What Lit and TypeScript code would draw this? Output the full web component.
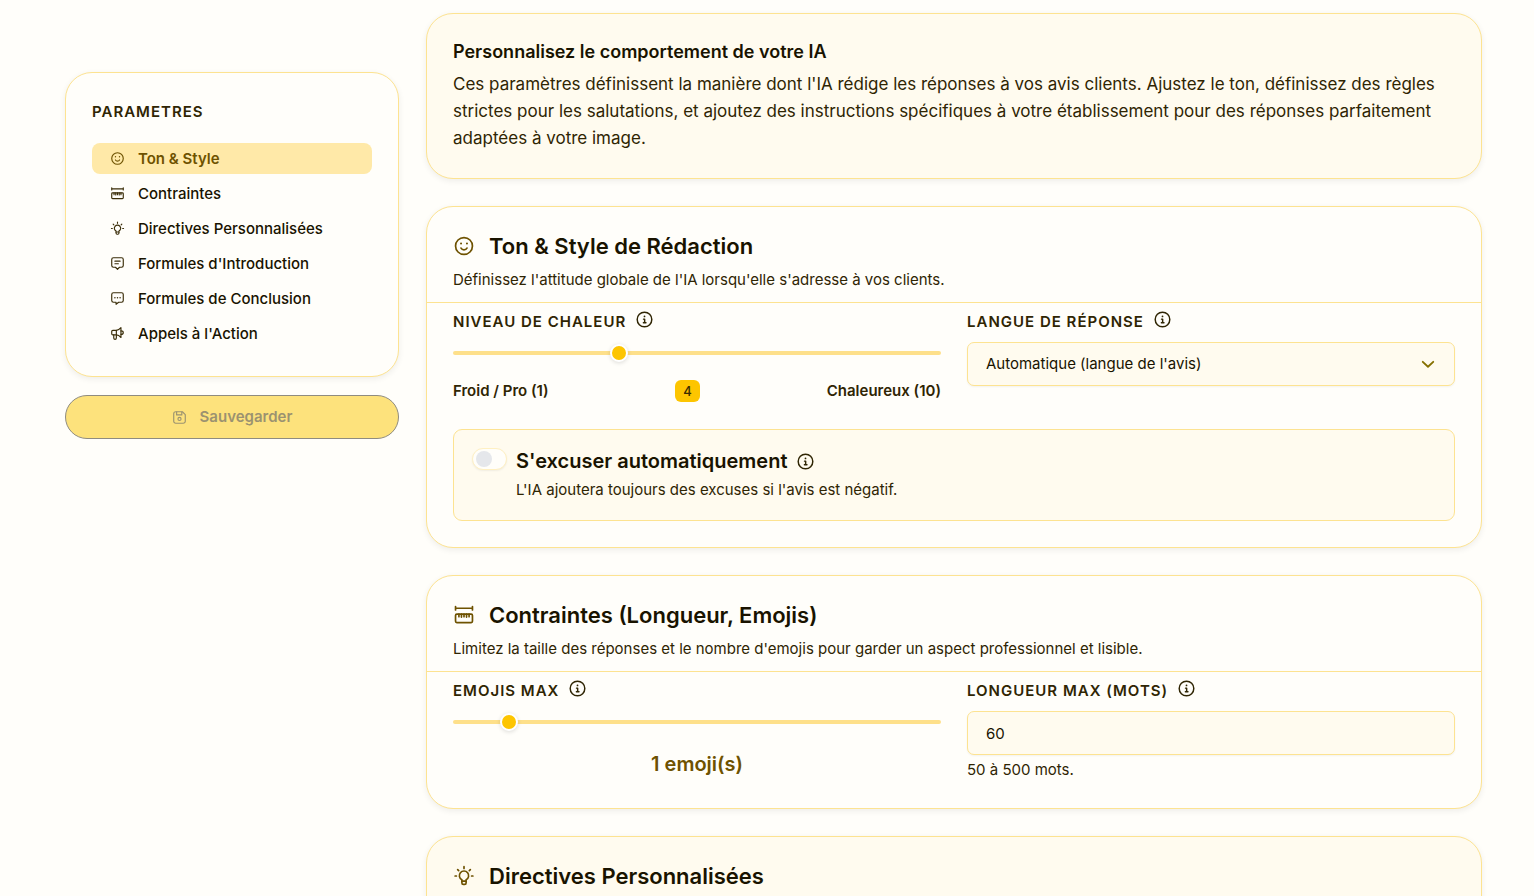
import { LitElement, html, css, svg } from "lit";
import { customElement, property, state } from "lit/decorators.js";

const ICONS: Record<string, unknown> = {
  smile: svg`<circle cx="12" cy="12" r="10"/><path d="M8.500 14.500c.7 1.300 2 2 3.500 2s2.800-.7 3.500-2"/><path d="M8.500 9h.01M15.500 9h.01" stroke-width="2.400"/>`,
  ruler: svg`<path d="M2 2v4M22 2v4M2 4h20"/><rect x="2" y="11" width="20" height="10" rx="1.500"/><path d="M6 11v3M9 11v3.500M12 11v3M15 11v3.500M18 11v3"/>`,
  bulb: svg`<path d="M9.500 16.500a5.500 5.500 0 1 1 5 0v3.500c0 1-.8 2-1.800 2h-1.400c-1 0-1.800-1-1.800-2z"/><path d="M9.500 18h5M12 1v2M1.500 12h1.500M21 12h1.500M4.500 4.500l1.200 1.200M19.500 4.500l-1.200 1.200"/>`,
  intro: svg`<path d="M5 2h14a3 3 0 0 1 3 3v10.500a3 3 0 0 1-3 3h-3.500L12 22l-3.500-3.500H5a3 3 0 0 1-3-3V5a3 3 0 0 1 3-3z"/><path d="M7.500 8h9M7.500 12.500h6"/>`,
  outro: svg`<path d="M5 2h14a3 3 0 0 1 3 3v10.500a3 3 0 0 1-3 3h-5L9.500 22v-3.500H5a3 3 0 0 1-3-3V5a3 3 0 0 1 3-3z"/><path d="M7.500 10.500h.01M12 10.500h.01M16.500 10.500h.01" stroke-width="2.600"/>`,
  megaphone: svg`<path d="M2 8.500a2 2 0 0 1 2-2h6c3 0 5.500-1.500 8-4.500v17c-2.500-3-5-4.500-8-4.500H4a2 2 0 0 1-2-2z"/><path d="M10 6.500v8M18 7.500c2.300 0 4 1 4 3s-1.700 3-4 3M5.500 14.500v5.500a2 2 0 0 0 4.500 0v-5.500"/>`,
  save: svg`<path d="M2 5.500A3.500 3.500 0 0 1 5.500 2H17l5 5v11.500a3.500 3.500 0 0 1-3.500 3.500h-13A3.500 3.500 0 0 1 2 18.500z"/><path d="M7 2.500v5h9v-5"/><circle cx="12" cy="14.500" r="2.700"/>`,
  info: svg`<circle cx="12" cy="12" r="10"/><path d="M10.700 11.500h1.500v5M10.500 16.500h3.500"/><path d="M12 7.800h.01" stroke-width="2.400"/>`,
  chevron: svg`<path d="M3.500 8.500l8.500 8 8.500-8" stroke-width="3"/>`,
};

@customElement("ui-icon")
class UiIcon extends LitElement {
  @property() name = "info";
  static styles = css`
    :host { display: inline-flex; flex: none; width: 19px; height: 19px; }
    .glyph { width: 100%; height: 100%; fill: none; stroke: currentColor; stroke-width: 2; stroke-linecap: round; stroke-linejoin: round; }
  `;
  render() {
    return html`<svg class="glyph" viewBox="-1 -1 26 26" aria-hidden="true">${ICONS[this.name]}</svg>`;
  }
}

@customElement("app-root")
class AppRoot extends LitElement {
  @state() private warmth = 4;
  @state() private emojis = 1;
  @state() private section = 0;

  private nav = [
    ["smile", "Ton & Style"],
    ["ruler", "Contraintes"],
    ["bulb", "Directives Personnalisées"],
    ["intro", "Formules d'Introduction"],
    ["outro", "Formules de Conclusion"],
    ["megaphone", "Appels à l'Action"],
  ];

  static styles = css`
    :host {
      display: block;
      height: 100vh;
      overflow: hidden;
      background: #fffefa;
      color: #191300;
      font-family: Inter, "Liberation Sans", sans-serif;
      font-size: 15px;
      line-height: 24px;
    }
    *, *::before, *::after { box-sizing: border-box; }
    h1, h2, h3, p { margin: 0; }
    .page {
      display: grid;
      grid-template-columns: 334px minmax(0, 1fr);
      gap: 27px;
      padding: 13px 52px 0 65px;
      align-items: start;
    }
    .side { display: flex; flex-direction: column; gap: 18px; padding-top: 59px; }
    .main { display: flex; flex-direction: column; gap: 27px; }
    .card {
      border: 1px solid #fde391;
      border-radius: 27px;
      background: #fffefa;
      box-shadow: 0 2px 6px rgba(0, 0, 0, 0.07);
    }
    .tinted { background: #fffbef; }
    .padded { padding: 26px; }
    .menu { padding: 27px 26px; }
    .caps {
      font-size: 15px;
      font-weight: 600;
      letter-spacing: 1px;
      text-transform: uppercase;
      color: #2f2503;
    }
    .nav { display: flex; flex-direction: column; gap: 4px; padding-top: 19px; }
    .item {
      display: flex;
      align-items: center;
      gap: 13px;
      height: 31px;
      padding: 0 18px;
      border-radius: 8px;
      color: #191300;
      font-weight: 500;
      text-decoration: none;
    }
    .item ui-icon { width: 15px; height: 15px; color: #3a2d08; }
    .item.active { background: #ffe9a8; color: #6e5200; font-weight: 600; }
    .item.active ui-icon { color: #6e5200; }
    .save {
      display: flex;
      align-items: center;
      justify-content: center;
      gap: 13px;
      height: 44px;
      border: 1px solid #8f8c80;
      border-radius: 22px;
      background: #fde27c;
      color: #9b9270;
      font: 600 15px/24px Inter, sans-serif;
    }
    .save ui-icon { width: 15px; height: 15px; }
    .lead { font-size: 18px; font-weight: 600; line-height: 24px; }
    .intro { padding-top: 7px; font-size: 17px; line-height: 27px; color: #2f2503; }
    .head { padding: 25px 26px 10px; border-bottom: 1px solid #fde391; }
    .head-row { display: flex; align-items: center; gap: 14px; }
    .head-row ui-icon { width: 22px; height: 22px; color: #6e5200; }
    .title { font-size: 22px; font-weight: 600; line-height: 28px; }
    .sub { padding-top: 8px; color: #2f2503; }
    .body { padding: 7px 26px 26px; }
    .cols { display: grid; grid-template-columns: repeat(2, minmax(0, 1fr)); gap: 26px; }
    .label-row { display: flex; align-items: flex-start; gap: 9px; color: #2f2503; }
    .option .label-row { align-items: center; }
    .range {
      display: block;
      appearance: none;
      width: 100%;
      height: 18px;
      margin: 10px 0 0;
      background: transparent;
    }
    .range::-webkit-slider-runnable-track { height: 4px; border-radius: 2px; background: #fee08a; }
    .range::-webkit-slider-thumb {
      appearance: none;
      width: 18px;
      height: 18px;
      margin-top: -7px;
      border: 2px solid #fff;
      border-radius: 50%;
      background: #fdc500;
      box-shadow: 0 1px 4px rgba(0, 0, 0, 0.14);
    }
    .scale { display: flex; justify-content: space-between; align-items: center; padding-top: 17px; font-weight: 600; color: #2f2503; }
    .badge { padding: 0 8px; border-radius: 6px; background: #fdc500; color: #3a2d00; font-size: 13px; font-weight: 500; line-height: 22px; }
    .count { display: block; padding-top: 20px; text-align: center; font-size: 20px; font-weight: 600; line-height: 27px; color: #6e5200; }
    .field {
      display: block;
      appearance: none;
      width: 100%;
      height: 44px;
      padding: 0 18px;
      border: 1px solid #fde391;
      border-radius: 7px;
      background: #fffbef;
      color: #191300;
      font: 400 15px/24px Inter, sans-serif;
      box-shadow: 0 1px 2px rgba(0, 0, 0, 0.05);
    }
    .control { position: relative; margin-top: 8px; }
    .control ui-icon { position: absolute; right: 19px; top: 14px; width: 16px; height: 16px; color: #857000; pointer-events: none; }
    .hint { padding-top: 3px; color: #2f2503; }
    .option {
      display: flex;
      align-items: flex-start;
      gap: 9px;
      margin-top: 26px;
      padding: 18px;
      border: 1px solid #fde391;
      border-radius: 9px;
      background: #fffbef;
    }
    .switch {
      display: flex;
      align-items: center;
      flex: none;
      appearance: none;
      width: 35px;
      height: 22px;
      margin: 0;
      padding: 2px 3px;
      border: 1px solid #fff0c2;
      border-radius: 11px;
      background: #fffefa;
      box-shadow: 0 1px 2px rgba(0, 0, 0, 0.06);
    }
    .switch::before { content: ""; width: 16px; height: 16px; border-radius: 50%; background: #e5e7eb; }
    .switch:checked { justify-content: flex-end; background: #fdc500; }
    .option-title { font-size: 20px; font-weight: 600; line-height: 27px; color: #191300; }
    .option-text { padding-top: 3px; color: #2f2503; }
  `;

  private header(icon: string, title: string, sub?: string) {
    return html`<header class="head">
      <div class="head-row"><ui-icon name=${icon}></ui-icon><h2 class="title">${title}</h2></div>
      ${sub ? html`<p class="sub">${sub}</p>` : ""}
    </header>`;
  }

  private label(id: string, text: string) {
    return html`<div class="label-row"><label class="caps" for=${id}>${text}</label><ui-icon name="info"></ui-icon></div>`;
  }

  render() {
    return html`<div class="page">
      <aside class="side">
        <div class="card menu">
          <h3 class="caps">Parametres</h3>
          <nav class="nav">
            ${this.nav.map(
              ([icon, text], i) => html`<a class="item ${i === this.section ? "active" : ""}" href="#section-${i}" @click=${() => (this.section = i)}>
                <ui-icon name=${icon}></ui-icon><span>${text}</span>
              </a>`
            )}
          </nav>
        </div>
        <button class="save" type="button" disabled><ui-icon name="save"></ui-icon>Sauvegarder</button>
      </aside>
      <main class="main">
        <section class="card tinted padded">
          <h1 class="lead">Personnalisez le comportement de votre IA</h1>
          <p class="intro">Ces paramètres définissent la manière dont l'IA rédige les réponses à vos avis clients. Ajustez le ton, définissez des règles strictes pour les salutations, et ajoutez des instructions spécifiques à votre établissement pour des réponses parfaitement adaptées à votre image.</p>
        </section>
        <section class="card" id="section-0">
          ${this.header("smile", "Ton & Style de Rédaction", "Définissez l'attitude globale de l'IA lorsqu'elle s'adresse à vos clients.")}
          <div class="body">
            <div class="cols">
              <div>
                ${this.label("warmth", "Niveau de chaleur")}
                <input class="range" id="warmth" type="range" min="1" max="10" .value=${String(this.warmth)} @input=${(e: Event) => (this.warmth = +(e.target as HTMLInputElement).value)} />
                <div class="scale"><span>Froid / Pro (1)</span><output class="badge" for="warmth">${this.warmth}</output><span>Chaleureux (10)</span></div>
              </div>
              <div>
                ${this.label("language", "Langue de réponse")}
                <div class="control">
                  <select class="field" id="language"><option>Automatique (langue de l'avis)</option></select>
                  <ui-icon name="chevron"></ui-icon>
                </div>
              </div>
            </div>
            <div class="option">
              <input class="switch" id="apologise" type="checkbox" />
              <div>
                <div class="label-row"><label class="option-title" for="apologise">S'excuser automatiquement</label><ui-icon name="info"></ui-icon></div>
                <p class="option-text">L'IA ajoutera toujours des excuses si l'avis est négatif.</p>
              </div>
            </div>
          </div>
        </section>
        <section class="card" id="section-1">
          ${this.header("ruler", "Contraintes (Longueur, Emojis)", "Limitez la taille des réponses et le nombre d'emojis pour garder un aspect professionnel et lisible.")}
          <div class="body">
            <div class="cols">
              <div>
                ${this.label("emojis", "Emojis max")}
                <input class="range" id="emojis" type="range" min="0" max="10" .value=${String(this.emojis)} @input=${(e: Event) => (this.emojis = +(e.target as HTMLInputElement).value)} />
                <output class="count" for="emojis">${this.emojis} emoji(s)</output>
              </div>
              <div>
                ${this.label("length", "Longueur max (mots)")}
                <div class="control"><input class="field" id="length" type="text" inputmode="numeric" value="60" /></div>
                <p class="hint">50 à 500 mots.</p>
              </div>
            </div>
          </div>
        </section>
        <section class="card tinted" id="section-2">
          ${this.header("bulb", "Directives Personnalisées")}
          <div class="body"></div>
        </section>
      </main>
    </div>`;
  }
}
